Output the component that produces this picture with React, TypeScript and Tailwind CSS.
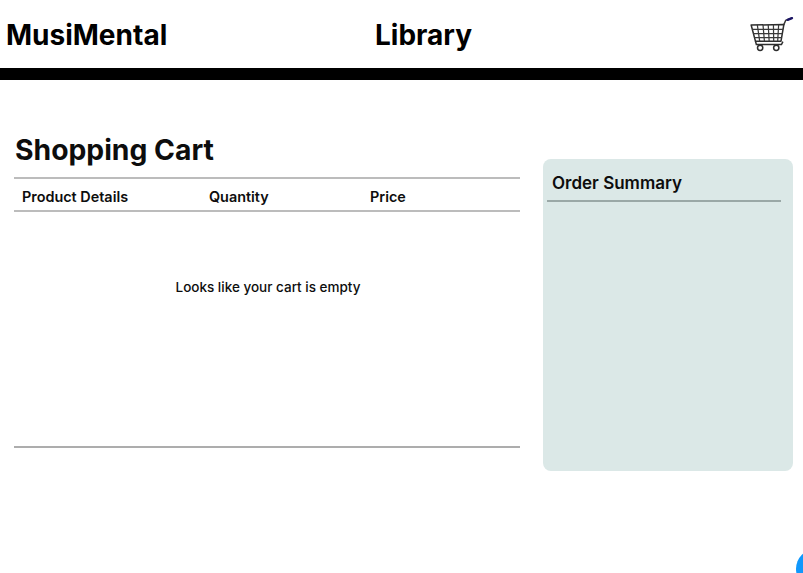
import React from 'react';

function CartIcon() {
  return (
    <svg width="44" height="36" viewBox="0 0 46 38" fill="none" className="block">
      {/* handle */}
      <path d="M35.5 8 L37.5 3.5 L43 1.5" stroke="#3a3a3a" strokeWidth="1.6" strokeLinecap="round" />
      <path d="M39.5 3 L44 1.2" stroke="#1b1464" strokeWidth="2.6" strokeLinecap="round" />
      {/* basket */}
      <path d="M1 8.5 L35.5 8 L32.5 25.5 L5.5 25.5 Z" stroke="#2e2e2e" strokeWidth="1.6" strokeLinejoin="round" />
      <path d="M2 13 L34.7 13 M3.2 17.5 L34 17.5 M4.4 21.8 L33.2 21.8" stroke="#3a3a3a" strokeWidth="1.3" />
      <path d="M7.5 8.4 L10 25.5 M13.5 8.3 L15 25.5 M19 8.2 L20 25.5 M24.5 8.2 L24.8 25.5 M30 8.1 L29 25.5" stroke="#3a3a3a" strokeWidth="1.3" />
      {/* chassis */}
      <path d="M5.5 25.5 L6.5 29 L33 29 L34.5 26" stroke="#2e2e2e" strokeWidth="1.6" />
      <circle cx="10.5" cy="32.5" r="2.8" stroke="#2e2e2e" strokeWidth="1.6" />
      <circle cx="27.5" cy="32.5" r="2.8" stroke="#2e2e2e" strokeWidth="1.6" />
    </svg>
  );
}

export default function App() {
  return (
    <div className="relative h-[573px] w-[803px] overflow-hidden bg-white font-['Inter',sans-serif] text-[#0d0d0d]">
      {/* Header */}
      <header className="flex h-[68px] items-center pr-[9px] pl-[6px] text-black">
        <h1 className="w-[369px] pt-[2px] text-[28px] font-bold whitespace-nowrap">MusiMental</h1>
        <span className="pt-[2px] text-[28px] font-bold">Library</span>
        <div className="ml-auto pt-[1px]"><CartIcon /></div>
      </header>
      <div className="h-3 bg-black" />

      <main className="flex items-start pl-[14px]">
        {/* Cart table */}
        <section className="w-[506px] shrink-0 pt-[50px]">
          <h2 className="mb-[7px] ml-[1px] text-[28.3px] leading-[40px] font-bold whitespace-nowrap">Shopping Cart</h2>
          <div className="flex h-[35px] items-center border-y-2 border-[#bcbcbc] pt-[4px] pl-2 text-[14.4px] font-semibold">
            <span className="w-[187px]">Product Details</span>
            <span className="w-[161px]">Quantity</span>
            <span>Price</span>
          </div>
          <div className="flex h-[236px] justify-center border-b-2 border-[#adadad] pt-[65px] pl-[2px] text-[13.5px] font-medium">
            <p className="h-fit">Looks like your cart is empty</p>
          </div>
        </section>

        {/* Order summary */}
        <aside className="mt-[79px] ml-[23px] h-[312px] w-[250px] rounded-lg bg-[#dbe8e7] px-1 pt-[14px]">
          <h3 className="pl-[5px] text-[17px] leading-[21px] font-semibold">Order Summary</h3>
          <div className="mt-[6px] h-[2px] w-[234px] bg-[#9aa8a7]" />
        </aside>
      </main>

      <div className="absolute top-[549px] left-[796px] h-10 w-10 rounded-full bg-[#1098fc]" />
    </div>
  );
}
